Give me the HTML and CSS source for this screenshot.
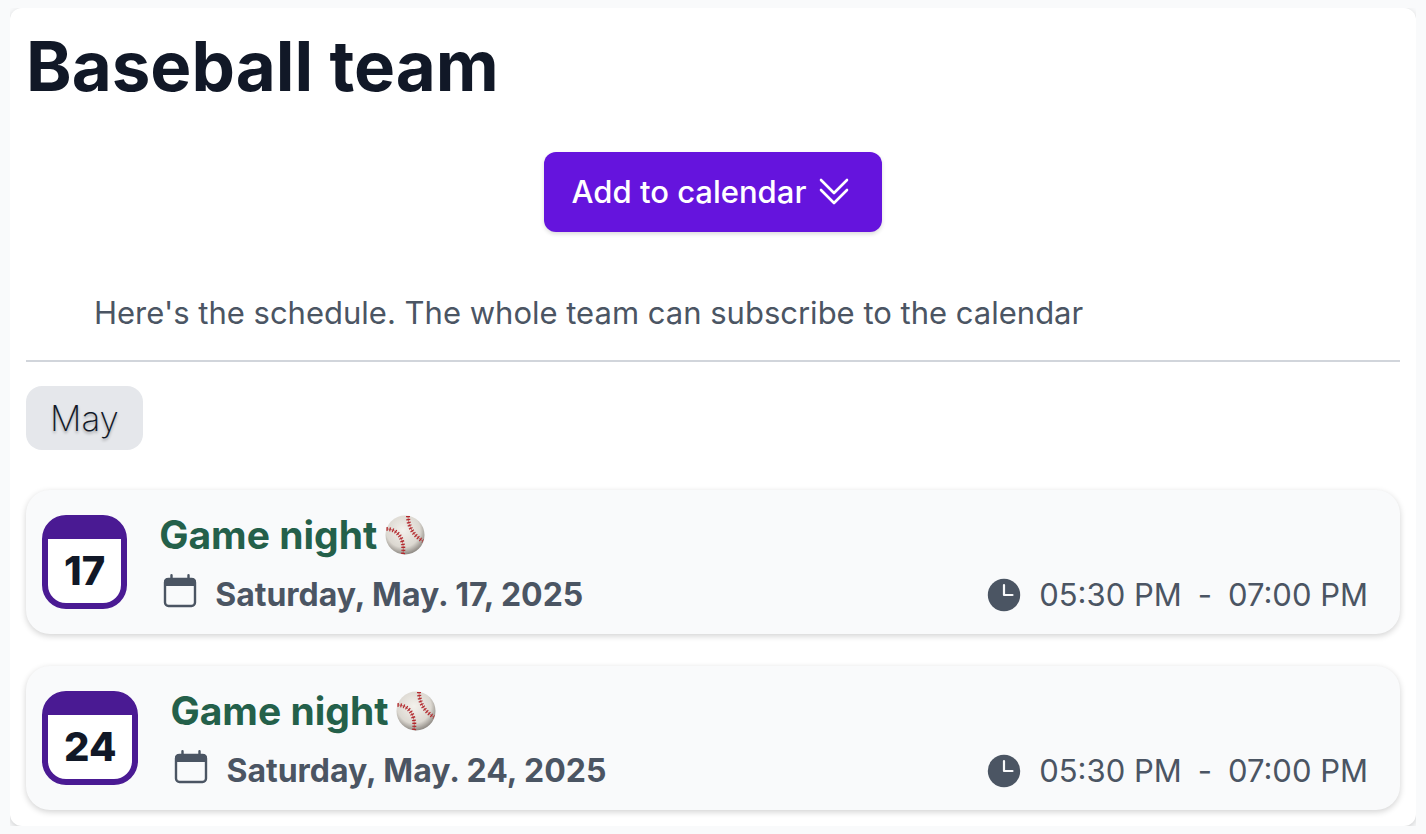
FILE: index.html
```html
<!DOCTYPE html>
<html lang="en">

<head>
    <meta charset="UTF-8">
    <meta name="viewport" content="width=device-width, initial-scale=1.0">
    <title>Baseball team</title>
    <link rel="stylesheet" href="styles.css">
</head>

<body>
    <!-- shared icons -->
    <svg class="sprite" aria-hidden="true">
        <defs>
            <radialGradient id="leather" cx="45%" cy="38%" r="62%">
                <stop offset="0" stop-color="#f3f1ec" />
                <stop offset="0.7" stop-color="#dcd8d1" />
                <stop offset="1" stop-color="#8f8a84" />
            </radialGradient>
        </defs>
        <symbol id="ball" viewBox="0 0 40 40">
            <circle cx="20" cy="20" r="19.5" fill="url(#leather)" />
            <g fill="none" stroke="#b3282d">
                <path d="M1.500 14C12 14 20 23 18 39" stroke-width="0.6" />
                <path d="M1.500 14C12 14 20 23 18 39" stroke-width="4" stroke-dasharray="1.200 1.800" />
                <path d="M23 1C23 12 29 21 38 26" stroke-width="0.6" />
                <path d="M23 1C23 12 29 21 38 26" stroke-width="4" stroke-dasharray="1.200 1.800" />
            </g>
        </symbol>
        <symbol id="calendar" viewBox="0 0 34 34">
            <rect x="2" y="5" width="30" height="27" rx="3.5" fill="none" stroke="currentColor" stroke-width="2.4" />
            <path fill="currentColor" d="M1 12V8a4 4 0 0 1 4-4h24a4 4 0 0 1 4 4v4z" />
            <path stroke="currentColor" stroke-width="2.4" stroke-linecap="round" d="M8.500 1.200v5M25.500 1.200v5" />
        </symbol>
        <symbol id="clock" viewBox="0 0 34 34">
            <circle cx="17" cy="17" r="16.2" fill="currentColor" />
            <path fill="none" stroke="#f9fafb" stroke-width="2.2" stroke-linecap="round" stroke-linejoin="round" d="M17 7v10h8.500" />
        </symbol>
    </svg>

    <main class="card">
        <h1>Baseball team</h1>

        <div class="display-center">
            <button class="add-btn" type="button">
                Add to calendar
                <svg class="chevrons" viewBox="0 0 30 28" aria-hidden="true">
                    <path d="M2 2l13 13L28 2M2 12l13 13 13-13" />
                </svg>
            </button>
        </div>

        <p class="description">Here's the schedule. The whole team can subscribe to the calendar</p>

        <h2 class="month">May</h2>

        <section class="event">
            <div class="day">17</div>
            <div class="details">
                <h3>Game night <svg class="ball" role="img" aria-label="Baseball"><use href="#ball" /></svg></h3>
                <div class="info">
                    <svg class="icon calendar" aria-hidden="true"><use href="#calendar" /></svg>
                    <span class="date">Saturday, May. 17, 2025</span>
                    <svg class="icon" aria-hidden="true"><use href="#clock" /></svg>
                    <span class="time"><span>05:30 PM</span><span>-</span><span>07:00 PM</span></span>
                </div>
            </div>
        </section>

        <section class="event">
            <div class="day">24</div>
            <div class="details">
                <h3>Game night <svg class="ball" role="img" aria-label="Baseball"><use href="#ball" /></svg></h3>
                <div class="info">
                    <svg class="icon calendar" aria-hidden="true"><use href="#calendar" /></svg>
                    <span class="date">Saturday, May. 24, 2025</span>
                    <svg class="icon" aria-hidden="true"><use href="#clock" /></svg>
                    <span class="time"><span>05:30 PM</span><span>-</span><span>07:00 PM</span></span>
                </div>
            </div>
        </section>
    </main>
</body>

</html>
```
FILE: styles.css
```css
* {
    box-sizing: border-box;
}

body {
    margin: 8px 10px;
    background-color: #f9fafb;
    color: #111827;
    font-family: Inter, "Liberation Sans", sans-serif;
    font-size: 31px;
    line-height: 48px;
}

h1, h2, h3, p {
    margin: 0;
}

.sprite {
    position: absolute;
    width: 0;
    height: 0;
}

.card {
    background-color: white;
    border-radius: 12px;
    padding: 16px;
    box-shadow: 0 2px 6px rgba(0, 0, 0, 0.18);
}

h1 {
    padding-top: 2px;
    font-size: 69px;
    line-height: 80px;
    font-weight: 700;
}

.display-center {
    display: flex;
    justify-content: center;
    margin-top: 46px;
}

.add-btn {
    display: flex;
    align-items: center;
    gap: 13px;
    height: 80px;
    padding: 0 33px 0 28px;
    border: none;
    border-radius: 12px;
    background-color: #6514dd;
    color: white;
    font: inherit;
    font-weight: 500;
    box-shadow: 0 2px 4px rgba(0, 0, 0, 0.15);
    cursor: pointer;
}

.chevrons {
    width: 30px;
    height: 28px;
    fill: none;
    stroke: white;
    stroke-width: 2.6;
    stroke-linecap: round;
    stroke-linejoin: round;
}

.description {
    margin-top: 57px;
    padding: 0 68px 23px;
    border-bottom: 2px solid #d1d5db;
    color: #4b5563;
}

.month {
    width: fit-content;
    margin: 24px 0 40px;
    padding: 8px 24px;
    border-radius: 16px;
    background-color: #e5e7eb;
    font-size: 35px;
    font-weight: 200;
    text-shadow: 0 2px 3px rgba(0, 0, 0, 0.3);
}

.event {
    display: flex;
    align-items: center;
    gap: 32px;
    height: 144px;
    padding: 0 32px 0 16px;
    border-radius: 24px;
    background-color: #f9fafb;
    box-shadow: 0 2px 6px rgba(0, 0, 0, 0.18);
}

.event + .event {
    margin-top: 32px;
}

.day {
    padding: 8px 16px;
    border: 6px solid #4a1a93;
    border-top-width: 24px;
    border-radius: 24px;
    background-color: white;
    font-size: 40px;
    font-weight: 800;
}

.details {
    flex: 1;
    padding-top: 6px;
}

h3 {
    display: flex;
    align-items: center;
    gap: 8px;
    color: #24604a;
    font-size: 39px;
    line-height: 60px;
    font-weight: 700;
}

.ball {
    width: 40px;
    height: 40px;
}

.info {
    display: flex;
    align-items: center;
    color: #4b5563;
    line-height: 60px;
}

.icon {
    width: 34px;
    height: 34px;
    margin-right: 18px;
}

.calendar {
    margin: 0 18px 8px 4px;
}

.date {
    flex: 1;
    font-size: 32px;
    font-weight: 700;
}

.time {
    display: flex;
    gap: 16px;
}
```
